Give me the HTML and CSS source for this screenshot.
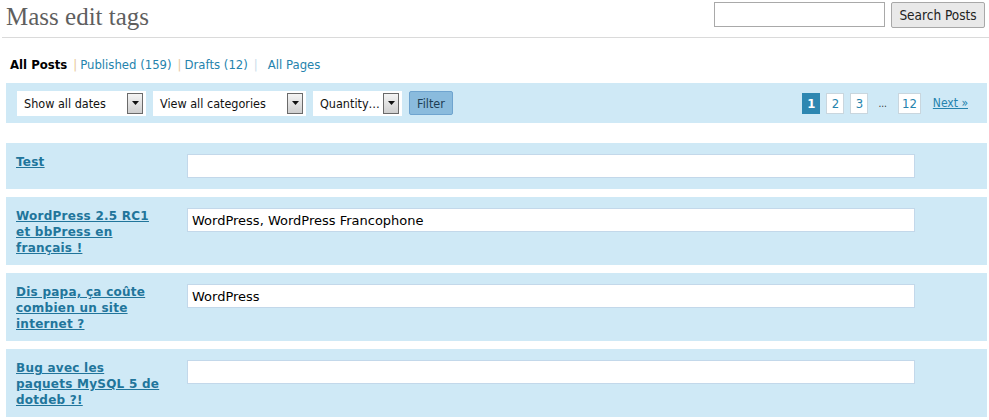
FILE: index.html
```html
<!DOCTYPE html>
<html lang="fr">
<head>
<meta charset="utf-8">
<title>Mass edit tags</title>
<link rel="stylesheet" href="styles.css">
</head>
<body>
<div class="wrap">
  <header class="head">
    <h2 class="title">Mass edit tags</h2>
    <form class="search">
      <input class="search-input" type="text">
      <button class="btn" type="button">Search Posts</button>
    </form>
  </header>

  <ul class="subnav">
    <li><a class="current" href="#">All Posts</a></li>
    <li><span class="sep">|</span><a href="#">Published (159)</a></li>
    <li><span class="sep">|</span><a href="#">Drafts (12)</a></li>
    <li><span class="sep sep-last">|</span><a href="#">All Pages</a></li>
  </ul>

  <div class="tablenav">
    <div class="filters">
      <div class="select s-dates"><span class="select-label">Show all dates</span><span class="arrow"><svg width="7" height="4" viewBox="0 0 7 4"><path d="M0 0h7L3.5 4z" fill="#111"/></svg></span></div>
      <div class="select s-cats"><span class="select-label">View all categories</span><span class="arrow"><svg width="7" height="4" viewBox="0 0 7 4"><path d="M0 0h7L3.5 4z" fill="#111"/></svg></span></div>
      <div class="select s-qty"><span class="select-label">Quantity…</span><span class="arrow"><svg width="7" height="4" viewBox="0 0 7 4"><path d="M0 0h7L3.5 4z" fill="#111"/></svg></span></div>
      <button class="filter-btn" type="button">Filter</button>
    </div>
    <div class="pages">
      <span class="page current-page">1</span>
      <a class="page" href="#">2</a>
      <a class="page" href="#">3</a>
      <span class="dots">...</span>
      <a class="page" href="#">12</a>
      <a class="next" href="#">Next »</a>
    </div>
  </div>

  <div class="rows">
    <div class="row">
      <a class="row-title" href="#">Test</a>
      <input class="tags" type="text" value="">
    </div>
    <div class="row">
      <a class="row-title" href="#">WordPress 2.5 RC1<br>et bbPress en<br>français !</a>
      <input class="tags" type="text" value="WordPress, WordPress Francophone">
    </div>
    <div class="row">
      <a class="row-title" href="#">Dis papa, ça coûte<br>combien un site<br>internet ?</a>
      <input class="tags" type="text" value="WordPress">
    </div>
    <div class="row">
      <a class="row-title" href="#">Bug avec les<br>paquets MySQL 5 de<br>dotdeb ?!</a>
      <input class="tags" type="text" value="">
    </div>
  </div>
</div>
</body>
</html>
```

FILE: styles.css
```css
* { box-sizing: border-box; }

body {
  margin: 0;
  background: #fff;
  font-family: "DejaVu Sans", Verdana, sans-serif;
  font-size: 11px;
  color: #333;
}

.wrap {
  padding-left: 2px;
}

.head {
  display: flex;
  justify-content: space-between;
  align-items: flex-start;
  height: 38px;
  border-bottom: 1px solid #dadada;
}

.title {
  margin: 0;
  padding: 2px 0 0 4px;
  font-family: "Liberation Serif", Georgia, serif;
  font-weight: normal;
  font-size: 25px;
  line-height: 30px;
  color: #5f5f5f;
}

.search {
  display: flex;
  gap: 6px;
  margin: 2px 4px 0 0;
}

.search-input {
  width: 171px;
  height: 25px;
  margin: 0;
  border: 1px solid #a9a9a9;
  background: #fff;
}

.btn {
  height: 26px;
  width: 94px;
  padding: 0;
  border: 1px solid #a8a8a8;
  border-radius: 2px;
  background: #e9e9e9;
  font-family: "DejaVu Sans Condensed", "DejaVu Sans", sans-serif;
  font-size: 13.5px;
  color: #222;
}

.subnav {
  display: flex;
  list-style: none;
  margin: 20px 0 0;
  padding: 0 0 0 8px;
  font-size: 11.7px;
  line-height: 14px;
}

.subnav a {
  color: #2583ad;
  text-decoration: none;
}

.subnav a.current {
  color: #000;
  font-weight: bold;
  margin-right: 6px;
}

.sep {
  color: #e8c79a;
  margin-right: 3px;
}

.subnav li + li + li .sep { margin-left: 6px; }
.sep-last { color: #c8dcea; margin-right: 10px; }

.tablenav {
  display: flex;
  justify-content: space-between;
  align-items: center;
  margin: 11px 2px 0 4px;
  height: 40px;
  padding: 0 19px 0 11px;
  background: #cfe9f6;
}

.filters {
  display: flex;
  align-items: center;
  gap: 7px;
}

.select {
  display: flex;
  align-items: center;
  justify-content: space-between;
  height: 25px;
  padding: 0 3px 0 7px;
  background: #fff;
  font-family: "DejaVu Sans Condensed", "DejaVu Sans", sans-serif;
  font-size: 12.5px;
  color: #111;
}

.s-dates { width: 129px; }
.s-cats { width: 153px; }
.s-qty { width: 89px; }

.arrow {
  display: flex;
  align-items: center;
  justify-content: center;
  width: 16px;
  height: 21px;
  border: 1px solid #6a6a6a;
  background: linear-gradient(#f4f4f4, #cfcfcf);
}

.filter-btn {
  height: 24px;
  width: 44px;
  padding: 0;
  border: 1px solid #6fa4cf;
  border-radius: 2px;
  background: #8abbdd;
  font-family: "DejaVu Sans Condensed", "DejaVu Sans", sans-serif;
  font-size: 12.5px;
  color: #1d3d55;
}

.pages {
  display: flex;
  align-items: center;
  gap: 6px;
  font-family: "DejaVu Sans Condensed", "DejaVu Sans", sans-serif;
  font-size: 13px;
}

.page {
  display: flex;
  align-items: center;
  justify-content: center;
  min-width: 18px;
  height: 21px;
  padding: 0 3px;
  border: 1px solid #c9d6de;
  background: #fff;
  color: #2583ad;
  text-decoration: none;
}

.current-page {
  background: #2e87b1;
  border-color: #2e87b1;
  color: #fff;
  font-weight: bold;
}

.dots {
  margin: 0 5px 0 4px;
  color: #333;
  font-size: 10px;
}

.next {
  margin-left: 6px;
  color: #2583ad;
  font-size: 12px;
  text-decoration: underline;
}

.rows {
  display: flex;
  flex-direction: column;
  gap: 8px;
  margin: 20px 2px 0 4px;
}

.row {
  display: grid;
  grid-template-columns: 171px 728px;
  align-items: start;
  min-height: 46px;
  padding: 11px 0 9px 10px;
  background: #cfe9f6;
}

.row-title {
  justify-self: start;
  font-size: 12px;
  line-height: 16px;
  letter-spacing: 0.25px;
  font-weight: bold;
  color: #21759b;
  text-decoration: underline;
}

.tags {
  margin: 0;
  height: 24px;
  width: 728px;
  padding: 0 4px;
  border: 1px solid #c3d8ea;
  background: #fff;
  font-family: "DejaVu Sans", Verdana, sans-serif;
  font-size: 13px;
  color: #000;
}
```
